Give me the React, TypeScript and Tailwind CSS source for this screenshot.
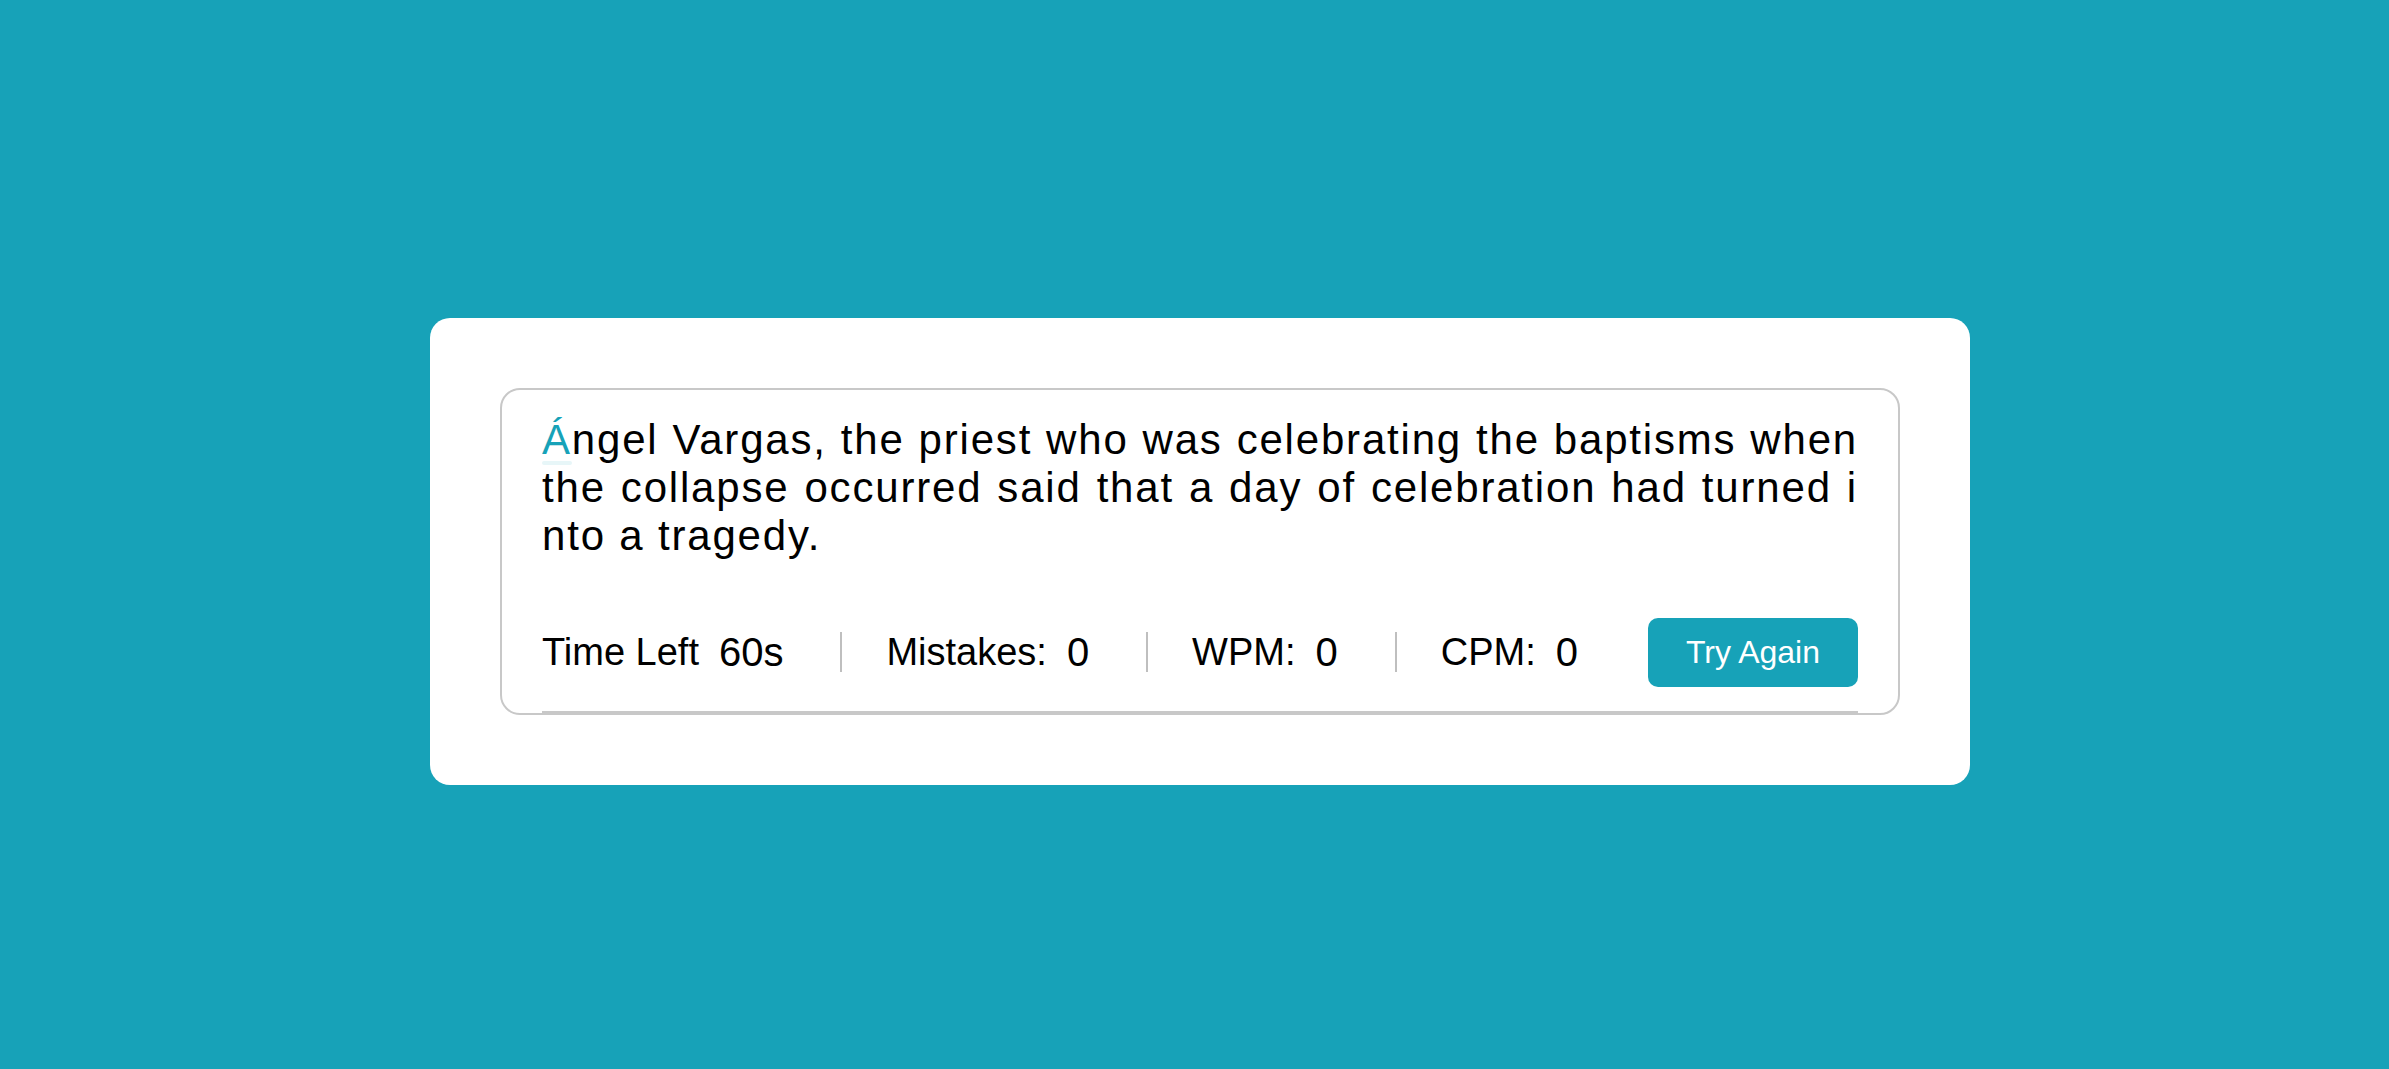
import React from "react";

const TEXT =
  "Ángel Vargas, the priest who was celebrating the baptisms when the collapse occurred said that a day of celebration had turned into a tragedy.";

function Stat({ label, value, first }: { label: string; value: string; first?: boolean }) {
  return (
    <li
      className={
        "flex h-[40px] items-center list-none " +
        (first ? "" : "pl-[44px] border-l-2 border-[#bfbfbf]")
      }
    >
      <p className="text-[38px] leading-[1.15]">{label}</p>
      <span className="block text-[40px] leading-[1.15] ml-[20px]">{value}</span>
    </li>
  );
}

export default function App() {
  const chars = Array.from(TEXT);
  return (
    <div
      className="min-h-screen w-full bg-[#17A2B8] pt-[318px] pl-[430px]"
      style={{ fontFamily: '"Liberation Sans", Arial, sans-serif' }}
    >
      <div className="w-[1540px] p-[70px] bg-white rounded-[20px]">
        <div className="pt-[26px] px-[40px] rounded-[20px] border-2 border-[#c8c8c8]">
          <div className="overflow-hidden">
            <p className="text-[42px] leading-[48px] tracking-[1.8px] text-justify break-all text-black">
              {chars.map((c, i) =>
                i === 0 ? (
                  <span key={i} className="relative text-[#17A2B8]">
                    {c}
                    <span className="absolute left-0 bottom-[-2px] w-full h-[4px] rounded-[5px] bg-[#17A2B8] opacity-10" />
                  </span>
                ) : (
                  <span key={i}>{c}</span>
                )
              )}
            </p>
          </div>
          <div className="mt-[34px] flex flex-wrap items-center justify-between py-[24px] border-b-2 border-[#c8c8c8]">
            <ul className="flex flex-wrap items-center justify-between w-[calc(100%-280px)] text-black">
              <Stat label="Time Left" value="60s" first />
              <Stat label="Mistakes:" value="0" />
              <Stat label="WPM:" value="0" />
              <Stat label="CPM:" value="0" />
            </ul>
            <button className="w-[210px] py-[16px] text-[32px] leading-[1.15] text-white bg-[#17A2B8] rounded-[10px] border-none outline-none">
              Try Again
            </button>
          </div>
        </div>
      </div>
    </div>
  );
}
